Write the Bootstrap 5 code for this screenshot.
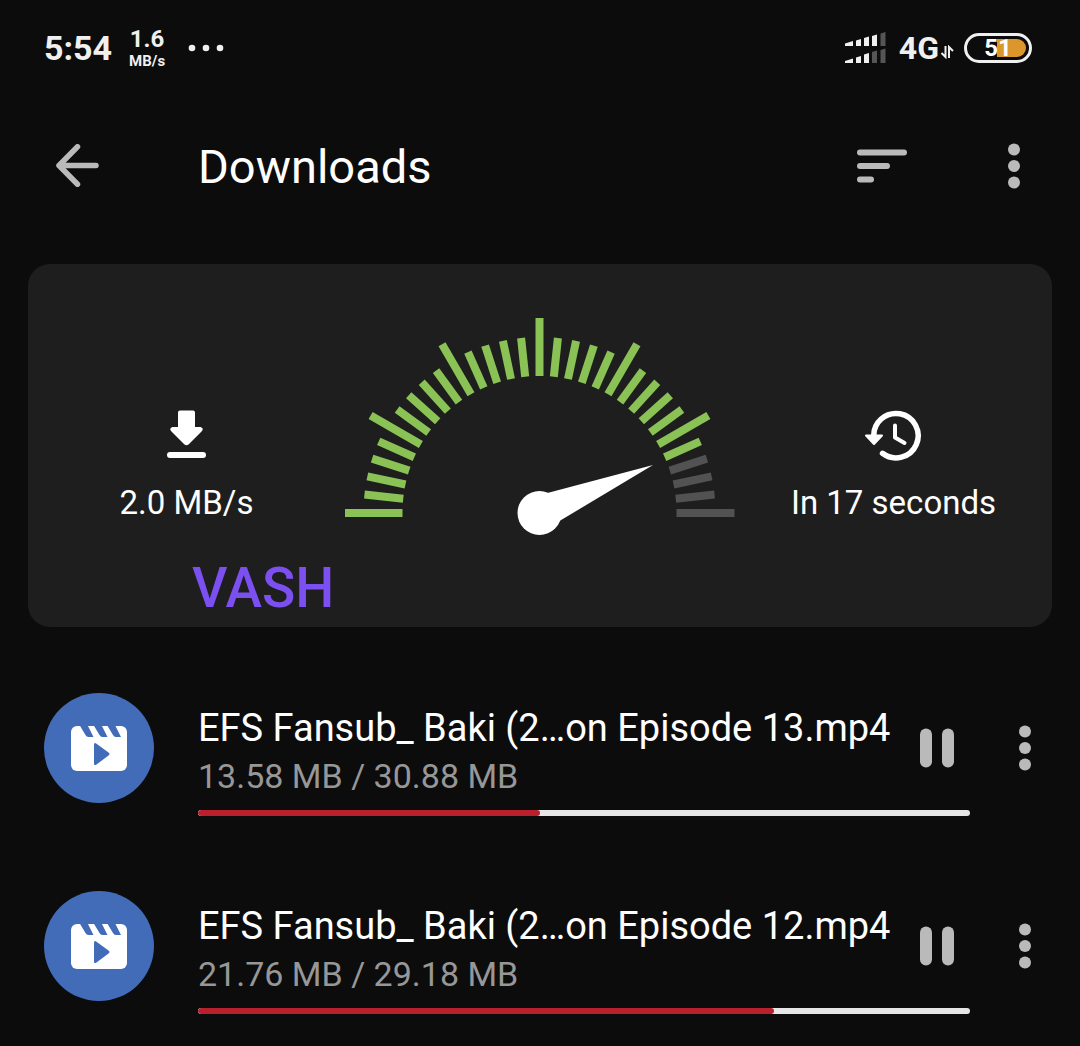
<!DOCTYPE html>
<html lang="en" data-bs-theme="dark">
<head>
<meta charset="utf-8">
<meta name="viewport" content="width=device-width, initial-scale=1">
<title>Downloads</title>
<link href="https://cdn.jsdelivr.net/npm/bootstrap@5.3.0/dist/css/bootstrap.min.css" rel="stylesheet">
<style>
  body { background: #0c0c0c; color: #fff; font-family: Roboto, "Liberation Sans", sans-serif; overflow-x: hidden; }
  svg { display: block; }
  .icon-btn { background: none; border: 0; padding: 0; color: #bababa; display: flex; align-items: center; justify-content: center; }

  .status-bar { height: 95px; padding: 0 48px 0 44px; color: #f0f0f0; }
  .clock { font-size: 34px; line-height: 40px; font-weight: 700; }
  .net-speed { font-weight: 700; text-align: center; margin-left: 17px; }
  .net-value { font-size: 24px; line-height: 26px; }
  .net-unit { font-size: 15px; line-height: 18px; }
  .notice-dots { margin-left: 23px; }
  .network { font-size: 32px; line-height: 40px; font-weight: 700; margin-left: 13px; }
  .battery { width: 68px; height: 30px; border: 3px solid #f0f0f0; border-radius: 15px; padding: 3px; margin-left: 10px; }
  .battery-level { border-radius: 9px; background: linear-gradient(90deg, transparent 49%, #dc972c 49%); font-size: 24px; line-height: 18px; font-weight: 700; color: #fff; }

  .app-bar { height: 141px; padding: 0 44px 0 55px; }
  .app-title { font-size: 47px; line-height: 56px; font-weight: 400; margin: 0 0 0 98px; padding-top: 3px; }
  .bar-actions { gap: 85px; }

  .speed-card { background: #1e1e1e; border-radius: 22px; margin: 28px 28px 22px; padding: 54px 0 92px; }
  .stat { padding-bottom: 12px; }
  .stat-text { font-size: 33px; line-height: 40px; margin-top: 22px; }
  .tag { left: 164px; bottom: 7px; font-size: 55px; line-height: 64px; font-weight: 500; color: #7c4ff0; }

  .download { padding: 55px 28px 31px 44px; }
  .thumb { width: 110px; margin: -11px 44px 0 0; flex: none; }
  .file-info { min-width: 0; }
  .file-name { font-size: 38px; line-height: 48px; font-weight: 400; margin: 0; }
  .file-size { font-size: 34px; line-height: 48px; color: #979797; margin: 0; }
  .pause-btn { width: 66px; height: 88px; flex: none; }
  .more-btn { width: 54px; height: 88px; margin-left: 28px; flex: none; }
  .progress.thin { height: 6px; margin-top: 10px; background: #e6e6e6; border-radius: 3px; }
  .progress.thin .progress-bar { background: #b91f2c; border-radius: 3px; }
</style>
<script src="https://cdn.jsdelivr.net/npm/bootstrap@5.3.0/dist/js/bootstrap.bundle.min.js"></script>
</head>
<body>

<!-- Shared symbols -->
<svg width="0" height="0" class="position-absolute" aria-hidden="true">
  <defs>
    <symbol id="dots" viewBox="0 0 12 46"><g fill="currentColor"><circle cx="6" cy="6.500" r="6"/><circle cx="6" cy="23" r="6"/><circle cx="6" cy="39.500" r="6"/></g></symbol>
    <symbol id="pause" viewBox="0 0 34 40"><g fill="currentColor"><rect width="12" height="39" y=".5" rx="6"/><rect x="22" y=".5" width="12" height="39" rx="6"/></g></symbol>
    <symbol id="video" viewBox="0 0 110 110">
      <circle cx="55" cy="55" r="55" fill="#426bb8"/>
      <rect x="27" y="33" width="56" height="45" rx="6" fill="#fff"/>
      <path fill="#426bb8" d="M35.500 32h8l6 12h-5q-2 0-3-2zM49.500 32h8l6 12h-5q-2 0-3-2zM63 32h8l6 12h-5q-2 0-3-2zM50 52q0-3 2.500-1.300l12 8.800q2 1.500 0 3l-12 9q-2.500 1.500-2.500-1z"/>
    </symbol>
    <path id="major" d="M-195 0h58"/>
    <path id="minor" d="M-176 0h39"/>
    <g id="ticks">
      <use href="#major"/>
      <use href="#minor" transform="rotate(6)"/>
      <use href="#minor" transform="rotate(12)"/>
      <use href="#minor" transform="rotate(18)"/>
      <use href="#minor" transform="rotate(24)"/>
    </g>
  </defs>
</svg>

<div class="status-bar d-flex align-items-center justify-content-between">
  <div class="d-flex align-items-center">
    <span class="clock">5:54</span>
    <div class="net-speed"><div class="net-value">1.6</div><div class="net-unit">MB/s</div></div>
    <svg class="notice-dots" width="36" height="8" fill="#f0f0f0" aria-hidden="true"><circle cx="4" cy="4" r="3.300"/><circle cx="18" cy="4" r="3.300"/><circle cx="32" cy="4" r="3.300"/></svg>
  </div>
  <div class="d-flex align-items-center">
    <svg width="41" height="32" viewBox="0 0 41 32" fill="#f0f0f0" aria-hidden="true">
      <path d="M0 11.500l8-2.500V14H0zM11 8.500l5-1.500v7h-5zM19 6l5-1.500V14h-5zM27 4l5-1.500V14h-5zM0 29l8-2.500V31H0zM11 25.500l5-1.500v7h-5zM19 22.500l5-1.500v10h-5z"/>
      <path fill="#555" d="M35.500 1.500l5-1.500V14h-5zM27 20l5-1.500V31h-5zM35.500 18l5-1.500V31h-5z"/>
    </svg>
    <span class="network">4G</span>
    <svg class="mt-2" width="15" height="14" viewBox="0 0 15 14" fill="none" stroke="#f0f0f0" stroke-width="2" aria-hidden="true"><path d="M6.500 1v11L2.500 8M10 13V2l4 4"/></svg>
    <div class="battery"><div class="battery-level text-center">51</div></div>
  </div>
</div>

<header class="app-bar d-flex align-items-center">
  <button type="button" class="icon-btn" aria-label="Back">
    <svg width="45" height="44" viewBox="0 0 45 44" fill="none" stroke="currentColor" stroke-width="5.500" stroke-linecap="round" stroke-linejoin="round"><path d="M22.500 2.800L4 21.500l18.500 18.700M4 21.500h37"/></svg>
  </button>
  <h1 class="app-title">Downloads</h1>
  <div class="bar-actions d-flex align-items-center ms-auto">
    <button type="button" class="icon-btn" aria-label="Sort">
      <svg width="50" height="34" viewBox="0 0 50 34" stroke="currentColor" stroke-width="6" stroke-linecap="round"><path d="M3 3.500h44M3 17h27M3 30.500h11"/></svg>
    </button>
    <button type="button" class="icon-btn px-3" aria-label="More options"><svg width="12" height="46"><use href="#dots"/></svg></button>
  </div>
</header>

<section class="speed-card position-relative d-flex align-items-end">
  <div class="stat d-flex flex-column align-items-center flex-fill w-25">
    <svg width="60" height="52" viewBox="0 0 60 52" fill="#fff" aria-hidden="true">
      <path d="M23 1.500h13q2 0 2 2V18h5.500q3.500 1 1.500 4L31.500 35.500q-2 1.500-4 0L14 22q-2-3 1.500-4H21V3.500q0-2 2-2z"/>
      <rect x="10" y="43" width="39" height="6" rx="3"/>
    </svg>
    <div class="stat-text">2.0 MB/s</div>
  </div>
  <svg class="flex-shrink-0" width="390" height="217" viewBox="-194.500 -195 390 217" role="img" aria-label="Download speed gauge">
    <g stroke="#8bc255" stroke-width="8">
      <use href="#ticks"/>
      <use href="#ticks" transform="rotate(30)"/>
      <use href="#ticks" transform="rotate(60)"/>
      <use href="#ticks" transform="rotate(90)"/>
      <use href="#ticks" transform="rotate(120)"/>
      <use href="#major" transform="rotate(150)"/>
      <use href="#minor" transform="rotate(156)"/>
    </g>
    <g stroke="#525252" stroke-width="8">
      <use href="#minor" transform="rotate(162)"/>
      <use href="#minor" transform="rotate(168)"/>
      <use href="#minor" transform="rotate(174)"/>
      <use href="#major" transform="rotate(180)"/>
    </g>
    <circle r="22" fill="#fff"/>
    <path fill="#fff" d="M6-19.500L113.500-48 20 8z"/>
  </svg>
  <div class="stat d-flex flex-column align-items-center flex-fill w-25">
    <svg width="60" height="52" viewBox="0 0 60 52" fill="none" stroke="#fff" stroke-linecap="round" stroke-linejoin="round" aria-hidden="true">
      <path stroke-width="5.500" d="M9.800 28A22.200 22.200 0 1 1 18.500 44.300"/>
      <path stroke-width="4" d="M31 16.500v12l9.500 5.500"/>
      <path fill="#fff" stroke-width="2" d="M2 26.500h16L10 35z"/>
    </svg>
    <div class="stat-text">In 17 seconds</div>
  </div>
  <div class="tag position-absolute">VASH</div>
</section>

<main>
  <article class="download d-flex align-items-start">
    <svg class="thumb" height="110" aria-hidden="true"><use href="#video"/></svg>
    <div class="file-info flex-grow-1">
      <div class="d-flex">
        <div class="file-info flex-grow-1 text-nowrap">
          <h2 class="file-name">EFS Fansub_ Baki (2…on Episode 13.mp4</h2>
          <p class="file-size">13.58 MB / 30.88 MB</p>
        </div>
        <button type="button" class="icon-btn pause-btn" aria-label="Pause Episode 13"><svg width="34" height="40"><use href="#pause"/></svg></button>
      </div>
      <div class="progress thin" role="progressbar" aria-label="Episode 13" aria-valuenow="44" aria-valuemin="0" aria-valuemax="100"><div class="progress-bar" style="width: 44.300%"></div></div>
    </div>
    <button type="button" class="icon-btn more-btn" aria-label="Options for Episode 13"><svg width="12" height="46"><use href="#dots"/></svg></button>
  </article>

  <article class="download d-flex align-items-start">
    <svg class="thumb" height="110" aria-hidden="true"><use href="#video"/></svg>
    <div class="file-info flex-grow-1">
      <div class="d-flex">
        <div class="file-info flex-grow-1 text-nowrap">
          <h2 class="file-name">EFS Fansub_ Baki (2…on Episode 12.mp4</h2>
          <p class="file-size">21.76 MB / 29.18 MB</p>
        </div>
        <button type="button" class="icon-btn pause-btn" aria-label="Pause Episode 12"><svg width="34" height="40"><use href="#pause"/></svg></button>
      </div>
      <div class="progress thin" role="progressbar" aria-label="Episode 12" aria-valuenow="75" aria-valuemin="0" aria-valuemax="100"><div class="progress-bar" style="width: 74.600%"></div></div>
    </div>
    <button type="button" class="icon-btn more-btn" aria-label="Options for Episode 12"><svg width="12" height="46"><use href="#dots"/></svg></button>
  </article>
</main>

</body>
</html>
